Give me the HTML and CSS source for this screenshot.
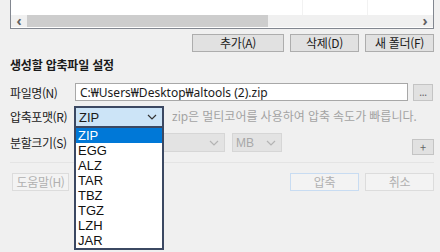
FILE: index.html
```html
<!DOCTYPE html>
<html lang="ko">
<head>
  <meta charset="UTF-8" />
  <title>압축</title>
  <link rel="stylesheet" href="styles.css">
</head>
<body>
  <div class="window">
    <!-- 파일 목록 (아래쪽만 보임) -->
    <div class="file-list">
      <div class="list-body">
        <span class="col-line" style="left: 291px"></span>
        <span class="col-line" style="left: 356px"></span>
      </div>
      <div class="hscroll">
        <span class="arrow">&lsaquo;</span>
        <div class="track"><div class="thumb"></div></div>
        <span class="arrow">&rsaquo;</span>
      </div>
    </div>

    <div class="btn-row">
      <button class="btn wide">추가(A)</button>
      <button class="btn">삭제(D)</button>
      <button class="btn">새 폴더(F)</button>
    </div>

    <h2 class="section-title">생성할 압축파일 설정</h2>

    <div class="form-row row-name">
      <label class="label">파일명(N)</label>
      <input class="path" type="text" value="C:₩Users₩Desktop₩altools (2).zip" />
      <button class="btn small">...</button>
    </div>

    <div class="form-row row-format">
      <label class="label">압축포맷(R)</label>
      <div class="combo-wrap">
        <div class="combo focused">
          <span>ZIP</span>
          <svg class="chev" width="10" height="6" viewBox="0 0 10 6"><path d="M1 1 L5 5 L9 1" fill="none" stroke="#333" stroke-width="1.2"/></svg>
        </div>
        <ul class="dropdown">
          <li class="selected">ZIP</li>
          <li>EGG</li>
          <li>ALZ</li>
          <li>TAR</li>
          <li>TBZ</li>
          <li>TGZ</li>
          <li>LZH</li>
          <li>JAR</li>
        </ul>
      </div>
      <span class="hint">zip은 멀티코어를 사용하여 압축 속도가 빠릅니다.</span>
    </div>

    <div class="form-row row-split">
      <label class="label">분할크기(S)</label>
      <div class="combo disabled size">
        <span></span>
        <svg class="chev" width="10" height="6" viewBox="0 0 10 6"><path d="M1 1 L5 5 L9 1" fill="none" stroke="#b4b4b4" stroke-width="1.2"/></svg>
      </div>
      <div class="combo disabled unit">
        <span>MB</span>
        <svg class="chev" width="10" height="6" viewBox="0 0 10 6"><path d="M1 1 L5 5 L9 1" fill="none" stroke="#b4b4b4" stroke-width="1.2"/></svg>
      </div>
      <button class="btn small plus">+</button>
    </div>

    <hr class="sep" />

    <div class="bottom-row">
      <button class="btn ghost help">도움말(H)</button>
      <div class="spacer"></div>
      <button class="btn ghost default">압축</button>
      <button class="btn ghost">취소</button>
    </div>
  </div>
</body>
</html>
```

FILE: styles.css
```css
body {
  margin: 0;
  padding: 0;
  background-color: #f0f0f0;
  font-family: "Noto Sans", "Noto Sans CJK KR", sans-serif;
  font-size: 12px;
  color: #1a1a1a;
  width: 440px;
  height: 252px;
  overflow: hidden;
}

.window {
  width: 424px;
  padding-left: 10px;
}

/* 파일 목록 */
.file-list {
  height: 28px;
  border: 1px solid #828790;
  border-top: none;
  background: #ffffff;
}

.list-body {
  position: relative;
  height: 15px;
}

.col-line {
  position: absolute;
  top: 0;
  width: 1px;
  height: 15px;
  background: #f2f2f2;
}

.hscroll {
  display: flex;
  height: 12px;
  background: #f0f0f0;
  align-items: center;
}

.arrow {
  width: 16px;
  text-align: center;
  font-size: 14px;
  font-weight: bold;
  line-height: 12px;
  color: #606060;
}

.track {
  flex: 1;
  height: 12px;
}

.thumb {
  width: 241px;
  height: 12px;
  background: #cdcdcd;
}

/* 버튼 */
.btn {
  font-family: "Noto Sans CJK KR", "Noto Sans", sans-serif;
  font-size: 12px;
  height: 18px;
  width: 69px;
  padding: 0;
  background: #e1e1e1;
  border: 1px solid #adadad;
  color: #1a1a1a;
  line-height: 14px;
  letter-spacing: -0.3px;
}

.btn.wide {
  width: 92px;
}

.btn-row {
  display: flex;
  justify-content: flex-end;
  gap: 6px;
  margin-top: 5px;
}

.section-title {
  font-family: "Noto Sans CJK KR", sans-serif;
  font-size: 12px;
  font-weight: 700;
  margin: 5px 0 0 0;
  line-height: 16px;
  letter-spacing: -0.2px;
}

.form-row {
  display: flex;
  align-items: center;
}

.label {
  font-family: "Noto Sans CJK KR", sans-serif;
  width: 64px;
  flex-shrink: 0;
  letter-spacing: -0.4px;
}

.row-name {
  margin-top: 10px;
  height: 18px;
}

.path {
  width: 333px;
  height: 18px;
  box-sizing: border-box;
  margin-left: 1px;
  border: 1px solid #a8a8a8;
  padding: 0 4px;
  font-family: "Noto Sans", "Noto Sans CJK KR", sans-serif;
  font-size: 12px;
  color: #1a1a1a;
  outline: none;
}

.btn.small {
  width: 20px;
  height: 17px;
  margin-left: 5px;
  font-size: 10px;
  color: #666;
  border-color: #c4c4c4;
}

.row-format {
  margin-top: 5px;
  height: 20px;
}

.combo-wrap {
  position: relative;
}

.combo {
  display: flex;
  justify-content: space-between;
  align-items: center;
  box-sizing: border-box;
  font-family: "Liberation Sans", sans-serif;
  font-size: 13px;
  padding: 0 5px 0 3px;
}

.combo.focused {
  width: 90px;
  height: 20px;
  background: #cce4f7;
  border: 2px solid #3b4862;
  border-bottom: none;
}

.dropdown {
  position: absolute;
  top: 20px;
  left: 0;
  width: 90px;
  margin: 0;
  padding: 0;
  list-style: none;
  box-sizing: border-box;
  border: 2px solid #3b4862;
  background: #ffffff;
  z-index: 5;
}

.dropdown li {
  height: 15px;
  line-height: 15px;
  padding-left: 2px;
  font-family: "Liberation Sans", sans-serif;
  font-size: 13px;
  color: #111;
}

.dropdown li.selected {
  background: #0078d7;
  color: #ffffff;
}

.hint {
  margin-left: 8px;
  font-family: "Noto Sans", "Noto Sans CJK KR", sans-serif;
  color: #a3a3a3;
  font-size: 12px;
}

.row-split {
  margin-top: 7px;
  height: 19px;
  align-items: flex-start;
}

.row-split .label {
  line-height: 19px;
}

.combo.disabled {
  height: 19px;
  background: #e3e3e3;
  border: 1px solid #d6d6d6;
  color: #a8a8a8;
  font-size: 12px;
}

.combo.size {
  width: 151px;
}

.combo.unit {
  width: 50px;
  margin-left: 7px;
}

.btn.plus {
  margin-left: auto;
  margin-top: 6px;
  width: 22px;
  height: 16px;
  font-size: 11px;
}

.sep {
  margin: 10px 0 0 0;
  border: none;
  border-top: 1px solid #e4e4e4;
  height: 0;
}

.bottom-row {
  display: flex;
  gap: 6px;
  margin-top: 10px;
}

.spacer {
  flex: 1;
}

.btn.ghost {
  background: #f3f3f3;
  border-color: #dcdcdc;
  color: #b0b0b0;
}

.btn.help {
  width: 57px;
  margin-left: 2px;
}

.btn.default {
  border-color: #c8dcf2;
}
```
